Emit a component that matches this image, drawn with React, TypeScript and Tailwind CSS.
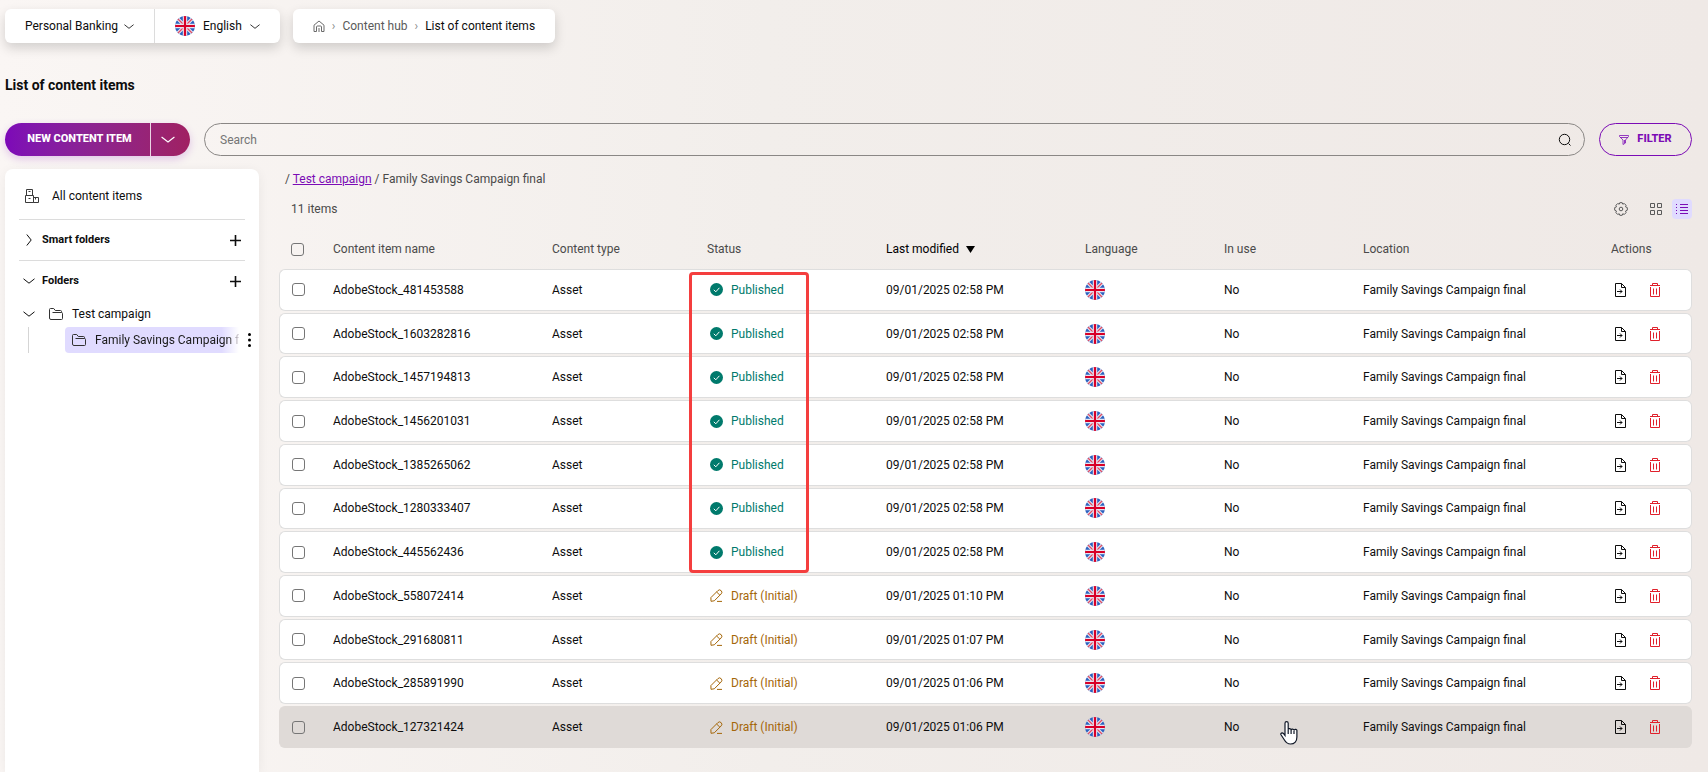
import type { ReactNode } from 'react';

type Item = {
  name: string;
  status: 'published' | 'draft';
  modified: string;
  hovered?: boolean;
};

function Icon({ className, box = '0 0 14 14', children }: { className: string; box?: string; children: ReactNode }) {
  return (
    <svg className={`shrink-0 ${className}`} viewBox={box} fill="none" stroke="currentColor" aria-hidden="true">
      {children}
    </svg>
  );
}

function Chevron({ className }: { className: string }) {
  return (
    <Icon className={className} box="0 0 12 6">
      <path d="M.5.8 6 5.2 11.5.8" />
    </Icon>
  );
}

function Flag() {
  return (
    <svg className="block h-5 w-5 shrink-0 rounded-full" viewBox="0 0 20 20" role="img" aria-label="English">
      <rect width="20" height="20" fill="#2c62c0" />
      <path d="M0 0 20 20M20 0 0 20" stroke="#e4e8f4" strokeWidth="3.4" />
      <path d="M0 0 20 20M20 0 0 20" stroke="#e04a62" strokeWidth="1.3" />
      <path d="M10 0V20M0 10H20" stroke="#e8e4f0" strokeWidth="4.4" />
      <path d="M10 0V20M0 10H20" stroke="#d80027" strokeWidth="2.2" />
    </svg>
  );
}

function FolderIcon() {
  return (
    <Icon className="h-3.5 w-3.5 text-[#333]">
      <path d="M.5 11V2.500a1 1 0 0 1 1-1h3.200l1.600 2h5.200a1 1 0 0 1 1 1v1M3.500 5.500h9a1 1 0 0 1 1 1v5a1 1 0 0 1-1 1H2A1.500 1.500 0 0 1 .5 11" />
    </Icon>
  );
}

function Checkbox({ label }: { label: string }) {
  return (
    <input
      type="checkbox"
      aria-label={label}
      className="block h-[13px] w-[13px] appearance-none rounded-[3px] border border-[#767676] checked:bg-[#7b0cb5]"
    />
  );
}

function Header() {
  return (
    <header className="flex h-[34px] gap-[13px] pr-4">
      <div className="flex rounded-md bg-white shadow-[0_5px_12px_rgba(0,0,0,0.16)]">
        <button type="button" className="flex items-center gap-1.5 border-r border-[#dcdcdc] px-5">
          Personal Banking
          <Chevron className="h-[5px] w-2.5" />
        </button>
        <button type="button" className="flex items-center gap-2 px-5">
          <Flag />
          English
          <Chevron className="h-[5px] w-2.5" />
        </button>
      </div>
      <nav
        aria-label="Breadcrumb"
        className="flex items-center gap-[7px] rounded-md bg-white px-5 shadow-[0_5px_12px_rgba(0,0,0,0.16)]"
      >
        <a href="#home" aria-label="Home" className="text-[#6b6b6b]">
          <Icon className="h-3 w-3" box="0 0 12 12">
            <path d="M1 11.500V5.200L6 1l5 4.200v6.300H8.500V7a1 1 0 0 0-1-1h-3a1 1 0 0 0-1 1v4.500H1M6 8v4" />
          </Icon>
        </a>
        <span className="text-[#8a8a8a]">›</span>
        <a href="#hub" className="text-[#5a5a5a]">
          Content hub
        </a>
        <span className="text-[#8a8a8a]">›</span>
        <span>List of content items</span>
      </nav>
    </header>
  );
}

function Toolbar() {
  return (
    <div className="flex h-[33px] gap-3.5 pr-4">
      <div className="flex w-[185px] rounded-full bg-linear-to-r from-[#7d08b8] to-[#a02062] text-white shadow-[0_3px_8px_rgba(125,8,184,0.2)]">
        <button type="button" className="flex-1 pl-1 text-[11px] font-extrabold">
          NEW CONTENT ITEM
        </button>
        <button
          type="button"
          aria-label="More content types"
          className="flex w-10 items-center border-l border-white/80 pl-2.5"
        >
          <Chevron className="h-[7px] w-3.5" />
        </button>
      </div>
      <label className="flex flex-1 items-center rounded-full border border-[#8a8785] pr-3 pl-[15px]">
        <input
          type="text"
          aria-label="Search"
          placeholder="Search"
          className="w-full bg-transparent outline-none placeholder:text-[#757575]"
        />
        <Icon className="h-3.5 w-3.5">
          <circle cx="6.500" cy="6.500" r="5.200" />
          <path d="m10.500 10.500 2 2" />
        </Icon>
      </label>
      <button
        type="button"
        className="flex w-[93px] items-center justify-center gap-2 rounded-full border border-[#7b0cb5] text-[11px] font-extrabold text-[#7b0cb5]"
      >
        <Icon className="h-2.5 w-2.5" box="0 0 10 10">
          <path d="M.500.500h9v1L6.500 5v3L4 9.500V5L.500 1.500zM1 2.500h8M5.500 5v3" strokeWidth=".8" />
        </Icon>
        FILTER
      </button>
    </div>
  );
}

function SidebarSection({ title, open }: { title: string; open?: boolean }) {
  return (
    <div className="flex h-[41px] items-center border-t border-[#dcdcdc]">
      <button type="button" className="flex items-center text-[11px] font-bold">
        <span className="flex w-5 justify-center">
          <Chevron className={open ? 'h-1.5 w-3' : 'h-1.5 w-3 -rotate-90'} />
        </span>
        <span className="ml-[3px]">{title}</span>
      </button>
      <button type="button" aria-label={`Add to ${title}`} className="mr-1 ml-auto">
        <Icon className="h-[11px] w-[11px]" box="0 0 11 11">
          <path d="M5.500 0V11M0 5.500H11" strokeWidth="1.600" />
        </Icon>
      </button>
    </div>
  );
}

function Sidebar() {
  return (
    <aside className="w-[254px] shrink-0 rounded-t-lg bg-white px-3.5 pt-1 shadow-[0_2px_12px_rgba(0,0,0,0.06)]">
      <a href="#all" className="flex h-[46px] items-center gap-[13px] pl-1.5">
        <Icon className="h-3.5 w-3.5 text-[#3a3a3a]">
          <path d="M1.500 6.500v-6h6v6M.500 13.500v-7h8v7zM8.500 8.500h5v5h-5zM3.500 2.500h2M3.500 9.500h2M10.500 8.500v2" />
        </Icon>
        All content items
      </a>
      <SidebarSection title="Smart folders" />
      <SidebarSection title="Folders" open />
      <div className="flex h-[26px] items-center">
        <button type="button" aria-label="Collapse Test campaign" className="flex w-5 justify-center">
          <Chevron className="h-1.5 w-3" />
        </button>
        <a href="#test-campaign" className="ml-2.5 flex items-center gap-[9px]">
          <FolderIcon />
          Test campaign
        </a>
      </div>
      <div className="-mr-3.5 ml-[9px] flex h-[26px] items-center border-l border-[#d5d5d5] pl-9">
        <a
          href="#family"
          className="flex h-full min-w-0 flex-1 items-center gap-[9px] overflow-hidden rounded-l bg-linear-to-r from-[#e0dbff] from-90% to-white pl-[7px]"
        >
          <FolderIcon />
          <span className="overflow-hidden bg-linear-to-r from-[#1a1a1a] from-92% to-[#e5dfe8] bg-clip-text whitespace-nowrap text-transparent">
            Family Savings Campaign final
          </span>
        </a>
        <button type="button" aria-label="Folder menu" className="flex w-5 justify-center">
          <svg className="h-3.5 w-[3px]" viewBox="0 0 3 14" aria-hidden="true">
            <circle cx="1.5" cy="1.5" r="1.5" />
            <circle cx="1.5" cy="7" r="1.5" />
            <circle cx="1.5" cy="12.5" r="1.5" />
          </svg>
        </button>
      </div>
    </aside>
  );
}

function Status({ status }: { status: Item['status'] }) {
  if (status === 'published') {
    return (
      <span className="flex items-center gap-2 pl-[3px] text-[#007a6c]">
        <svg className="h-[13px] w-[13px]" viewBox="0 0 13 13" aria-hidden="true">
          <circle cx="6.5" cy="6.5" r="6.5" fill="#007a6c" />
          <path d="m3.800 6.800 2 2 3.600-4" fill="none" stroke="#fff" />
        </svg>
        Published
      </span>
    );
  }
  return (
    <span className="flex items-center gap-2 pl-[3px] text-[#a5670a]">
      <Icon className="h-[13px] w-[13px]" box="0 0 13 13">
        <path d="M1 12.300.900 8.600 7.800 1.700a2.300 2.300 0 0 1 3.400 3.200L4.300 11.800zM6.600 3l3.300 3.200M7 12.400h5" />
      </Icon>
      Draft (Initial)
    </span>
  );
}

function HandCursor() {
  return (
    <svg className="pointer-events-none absolute top-3.5 left-14 z-10 h-6 w-[18px]" viewBox="0 0 18 24" aria-hidden="true">
      <path
        d="M5 14.500V2.300a1.600 1.600 0 0 1 3.200 0V8.500a1.500 1.500 0 0 1 2.900.500 1.500 1.500 0 0 1 2.900.500 1.500 1.500 0 0 1 2.900.800V16c0 4-2.300 7-6.400 7-3.500 0-4.800-1.600-6.400-4.500L1 13.800c-.800-1.500 1.200-2.600 2.400-1.300z"
        fill="#fff"
        stroke="#111827"
        strokeWidth="1.2"
      />
      <path d="M8.200 8.500v4.500M11.100 9v4M14 10v3" stroke="#111827" strokeWidth="1.2" />
    </svg>
  );
}

function ItemRow({ item, first }: { item: Item; first: boolean }) {
  const tone = item.hovered
    ? '[&>td]:border-[#dfdad7] [&>td]:bg-[#dfdad7]'
    : '[&>td]:border-[#dedede] [&>td]:bg-white';

  return (
    <tr
      className={`[&>td]:border-y [&>td]:p-0 [&>td:first-child]:rounded-l-md [&>td:first-child]:border-l [&>td:last-child]:rounded-r-md [&>td:last-child]:border-r ${tone}`}
    >
      <td>
        <div className="pl-3">
          <Checkbox label={`Select ${item.name}`} />
        </div>
      </td>
      <td>{item.name}</td>
      <td>Asset</td>
      <td className="relative">
        <Status status={item.status} />
        {/* Highlight around the published items */}
        {first && (
          <span className="pointer-events-none absolute top-0.5 -left-[18px] z-10 h-[301px] w-[120px] rounded-sm border-3 border-[#f43e3e]" />
        )}
      </td>
      <td>{item.modified}</td>
      <td>
        <Flag />
      </td>
      <td className="relative">
        No
        {item.hovered && <HandCursor />}
      </td>
      <td>Family Savings Campaign final</td>
      <td>
        <div className="flex items-center gap-6 pl-1">
          <button type="button" aria-label={`Move ${item.name}`}>
            <Icon className="h-3.5 w-[11px]" box="0 0 11 14">
              <path d="M.500 13.500V.500h6l4 4v9zM6.500.500v4h4M2 8.500h5M5 6.500l2 2-2 2" />
            </Icon>
          </button>
          <button type="button" aria-label={`Delete ${item.name}`} className="text-[#e0202b]">
            <Icon className="h-3.5 w-2.5" box="0 0 10 14">
              <path d="M0 2.500h10M2.500 2.500v-2h5v2M.500 4v9.500h9V4M3.500 5.500v6M6.500 5.500v6" />
            </Icon>
          </button>
        </div>
      </td>
    </tr>
  );
}

function ItemTable() {
  return (
    <table className="h-[523px] w-full table-fixed border-separate border-spacing-x-0 border-spacing-y-0.5 text-left">
      <thead className="text-[#4a4a4a]">
        <tr className="h-[38px] [&>th]:p-0 [&>th]:pt-0.5 [&>th]:font-normal">
          <th className="w-[54px]">
            <div className="pl-3">
              <Checkbox label="Select all" />
            </div>
          </th>
          <th className="w-[219px]">Content item name</th>
          <th className="w-[155px]">Content type</th>
          <th className="w-[179px]">Status</th>
          <th className="w-[199px]">
            <button type="button" className="flex items-center gap-[7px] text-black">
              Last modified
              <svg className="h-[7px] w-[9px]" viewBox="0 0 9 7" aria-hidden="true">
                <path d="M0 0H9L4.500 7z" />
              </svg>
            </button>
          </th>
          <th className="w-[139px]">Language</th>
          <th className="w-[139px]">In use</th>
          <th className="w-[248px]">Location</th>
          <th className="w-[81px]">Actions</th>
        </tr>
      </thead>
      <tbody>
        {items.map((item, i) => (
          <ItemRow key={item.name} item={item} first={i === 0} />
        ))}
      </tbody>
    </table>
  );
}

function ViewControls() {
  return (
    <div className="flex items-center text-[#5a5a5a]">
      <button type="button" aria-label="Settings" className="mr-[22px]">
        <Icon className="h-3.5 w-3.5">
          <circle cx="7" cy="7" r="1.8" />
          <path d="M5.800.700h2.400l.500 1.400 1.700-.500 1.700 1.700-.600 1.500 1.800.800v2.600l-1.800.900.600 1.500-1.700 1.800-1.700-.600-.500 1.500H5.800l-.500-1.500-1.700.600-1.700-1.800.600-1.500L.700 8.200V5.600l1.800-.800L1.900 3.300l1.700-1.700 1.700.500z" />
        </Icon>
      </button>
      <button type="button" aria-label="Grid view" className="mr-2.5">
        <Icon className="h-3 w-3" box="0 0 12 12">
          <path d="M.500.500h4v4h-4zM7.500.500h4v4h-4zM.500 7.500h4v4h-4zM7.500 7.500h4v4h-4z" />
        </Icon>
      </button>
      <button
        type="button"
        aria-label="List view"
        className="flex h-5 w-5 items-center justify-center rounded bg-[#e0dbff] text-[#7b0cb5]"
      >
        <Icon className="h-3 w-3" box="0 0 12 12">
          <path d="M4 1.500h8M4 4.500h8M4 7.500h8M4 10.500h8M0 1.500h1M0 4.500h1M0 7.500h1M0 10.500h1" />
        </Icon>
      </button>
    </div>
  );
}

export default function App() {
  return (
    <div className="flex min-h-screen flex-col bg-linear-to-r from-[#faf6f4] via-[#f2eeeb] via-45% to-[#efe9e6] pt-[9px] pl-[5px] font-[Roboto,sans-serif] text-xs text-[#0d0d0d]">
      <Header />
      <h1 className="mt-8 mb-7 text-sm leading-5 font-bold">List of content items</h1>
      <Toolbar />
      <div className="mt-[13px] flex flex-1 gap-5 pr-4">
        <Sidebar />
        <main className="min-w-0 flex-1">
          <div className="pt-0.5 pl-1.5 leading-4 text-[#4a4a4a]">
            / <a href="#test-campaign" className="text-[#7b0cb5] underline">Test campaign</a> / Family Savings Campaign
            final
          </div>
          <div className="mt-3 mb-2 flex h-5 items-center justify-between pl-3 text-[#4a4a4a]">
            <span>11 items</span>
            <ViewControls />
          </div>
          <ItemTable />
        </main>
      </div>
    </div>
  );
}

const items: Item[] = [
  { name: 'AdobeStock_481453588', status: 'published', modified: '09/01/2025 02:58 PM' },
  { name: 'AdobeStock_1603282816', status: 'published', modified: '09/01/2025 02:58 PM' },
  { name: 'AdobeStock_1457194813', status: 'published', modified: '09/01/2025 02:58 PM' },
  { name: 'AdobeStock_1456201031', status: 'published', modified: '09/01/2025 02:58 PM' },
  { name: 'AdobeStock_1385265062', status: 'published', modified: '09/01/2025 02:58 PM' },
  { name: 'AdobeStock_1280333407', status: 'published', modified: '09/01/2025 02:58 PM' },
  { name: 'AdobeStock_445562436', status: 'published', modified: '09/01/2025 02:58 PM' },
  { name: 'AdobeStock_558072414', status: 'draft', modified: '09/01/2025 01:10 PM' },
  { name: 'AdobeStock_291680811', status: 'draft', modified: '09/01/2025 01:07 PM' },
  { name: 'AdobeStock_285891990', status: 'draft', modified: '09/01/2025 01:06 PM' },
  { name: 'AdobeStock_127321424', status: 'draft', modified: '09/01/2025 01:06 PM', hovered: true },
];
